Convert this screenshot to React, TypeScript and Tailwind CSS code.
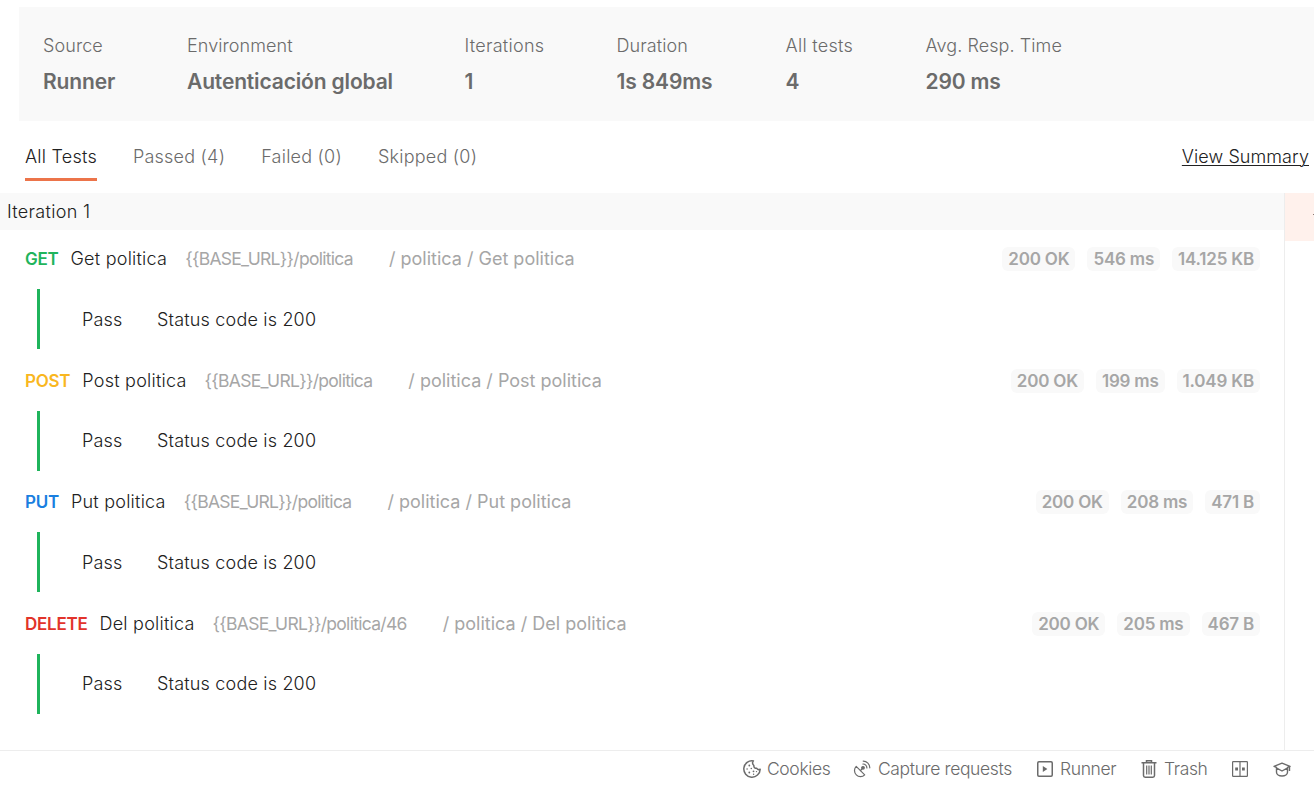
import type { ReactNode } from "react";

const stats = [
  { label: "Source", value: "Runner", cls: "w-[72px]" },
  { label: "Environment", value: "Autenticación global", cls: "w-[205.5px]" },
  { label: "Iterations", value: "1", cls: "w-[80px] tracking-[0.26px]" },
  { label: "Duration", value: "1s 849ms", cls: "w-[97px]" },
  { label: "All tests", value: "4", cls: "w-[68px] tracking-[0.28px]" },
  { label: "Avg. Resp. Time", value: "290 ms", cls: "w-[136px]" },
];

const requests = [
  { method: "GET", color: "text-[#1fb45c]", name: "Get politica", url: "{{BASE_URL}}/politica", time: "546 ms", size: "14.125 KB" },
  { method: "POST", color: "text-[#f9b71f]", name: "Post politica", url: "{{BASE_URL}}/politica", time: "199 ms", size: "1.049 KB" },
  { method: "PUT", color: "text-[#1a7fe0]", name: "Put politica", url: "{{BASE_URL}}/politica", time: "208 ms", size: "471 B" },
  { method: "DELETE", color: "text-[#e2332b]", name: "Del politica", url: "{{BASE_URL}}/politica/46", time: "205 ms", size: "467 B" },
];

function Badge({ children }: { children: ReactNode }) {
  return (
    <span className="flex h-6 items-center rounded-md bg-[#f9f9f9] px-1.5 text-[17px] font-semibold tracking-[-0.2px] text-[#a6a6a6]">
      {children}
    </span>
  );
}

function CookieIcon() {
  return (
    <svg width="18" height="18" viewBox="0 0 18 18" fill="none" stroke="#6b6b6b" strokeWidth="1.5" strokeLinejoin="round">
      <path d="M10.4.9A8.2 8.2 0 1 0 17.2 9.2c-1.2.7-2.7.3-3.4-.9-1.8.3-3.2-1-2.9-2.8C9.500 4.300 9.400 2.200 10.400.9Z" />
      <g fill="#6b6b6b" stroke="none">
        <circle cx="6.300" cy="5.500" r=".9" />
        <circle cx="4.100" cy="9" r=".8" />
        <circle cx="8.300" cy="8.500" r=".8" />
        <circle cx="6.300" cy="12.500" r=".9" />
        <circle cx="10.500" cy="11.300" r=".9" />
        <circle cx="10.600" cy="14.300" r=".7" />
        <circle cx="13.500" cy="11.600" r=".7" />
      </g>
    </svg>
  );
}

function SatelliteIcon() {
  return (
    <svg width="18" height="18" viewBox="0 0 18 18" fill="none" stroke="#6b6b6b" strokeWidth="1.200" strokeLinecap="round">
      <path d="M3.200 6.300 11.700 14.800c-2.300 2.400-6 2.500-8.400.1S.9 8.600 3.200 6.300Z" strokeLinejoin="round" />
      <path d="m7.500 10.500 2.200-2.400" />
      <circle cx="10" cy="7.800" r="1.300" fill="#6b6b6b" />
      <path d="M9.900 4c2.200-.1 4 1.700 4 3.900M10.200 1.100c3.700 0 6.600 3 6.600 6.700" />
    </svg>
  );
}

function RunnerIcon() {
  return (
    <svg width="16" height="16" viewBox="0 0 16 16" fill="none" stroke="#6b6b6b" strokeWidth="1.500">
      <rect x=".75" y=".75" width="14.500" height="14.500" rx="1.200" />
      <path d="M5.800 5v6l4.600-3Z" fill="#6b6b6b" stroke="none" />
    </svg>
  );
}

function TrashIcon() {
  return (
    <svg width="16" height="18" viewBox="0 0 16 18" fill="none" stroke="#6b6b6b" strokeWidth="1.500">
      <path d="M.5 2.700h15M5.500 2.500V.8h5v1.700M2.500 3v12.500c0 1 .7 1.700 1.700 1.700h7.600c1 0 1.700-.7 1.700-1.700V3" />
      <path d="M5.700 5.500v9M8 5.500v9M10.300 5.500v9" strokeWidth="1.200" />
    </svg>
  );
}

function PanesIcon() {
  return (
    <svg width="16" height="16" viewBox="0 0 16 16" fill="none" stroke="#6b6b6b" strokeWidth="1.200">
      <rect x=".6" y=".6" width="14.800" height="14.800" rx=".6" />
      <path d="M8 .6v14.800" />
      <path d="M3.200 6.600h2.800v2.800H3.200zM10 6.600h2.800v2.800H10z" fill="#6b6b6b" stroke="none" />
    </svg>
  );
}

function BootcampIcon() {
  return (
    <svg width="18" height="15" viewBox="0 0 18 15" fill="none" stroke="#6b6b6b" strokeWidth="1.400" strokeLinejoin="round">
      <path d="M4 5.700 1 4.400l8-3.200 8 3.200-3 1.300" />
      <path d="M3.500 5.500v4.800c0 2.100 2.400 3.700 5.500 3.700s5.500-1.600 5.500-3.700V5.500M3.800 6.200 9 9l5.200-2.800M16.500 4.600v4.400" />
    </svg>
  );
}

export default function App() {
  return (
    <div className="flex h-[789px] w-[1314px] flex-col overflow-hidden bg-white pt-[7px] font-['Inter',sans-serif] text-[18px] leading-6 text-[#212121]">
      <header className="ml-[19px] flex h-[114px] shrink-0 gap-[72px] bg-[#f9f9f9] pt-[27px] pl-6 tracking-[0.08px] text-[#6b6b6b]">
        {stats.map((s) => (
          <div key={s.label} className={`flex shrink-0 flex-col gap-3 whitespace-nowrap ${s.cls}`}>
            <span className="font-light">{s.label}</span>
            <span className="text-[21px] font-semibold tracking-[-0.15px]">{s.value}</span>
          </div>
        ))}
      </header>

      <nav className="flex h-[72px] shrink-0 items-start justify-between pt-6 pr-[5px] pl-[25px] font-light tracking-[0.23px]">
        <div className="flex gap-9 text-[#6b6b6b]">
          <span className="h-9 border-b-3 border-[#ec744a] text-[#212121]">All Tests</span>
          <span>Passed (4)</span>
          <span>Failed (0)</span>
          <span>Skipped (0)</span>
        </div>
        <a className="tracking-[0.08px] underline decoration-1 underline-offset-2">View Summary</a>
      </nav>

      <main className="flex h-[557px] shrink-0">
        <section className="w-[1284px]">
          <h2 className="flex h-[37px] items-center bg-[#f9f9f9] pt-px pl-[7px] font-light tracking-[0.3px]">Iteration 1</h2>
          {requests.map((r) => (
            <article key={r.method} className="h-[121.5px] pt-[17px]">
              <div className="flex h-6 items-center justify-between pr-6 pl-[25px]">
                <div className="flex items-center whitespace-nowrap">
                  <span className={`mr-3 text-[17px] font-semibold tracking-[-0.25px] ${r.color}`}>{r.method}</span>
                  <span className="mr-[18px] font-light tracking-[0.23px]">{r.name}</span>
                  <span className="mr-9 text-[17.5px] tracking-[-0.7px] text-[#a6a6a6]">{r.url}</span>
                  <span className="text-[#a6a6a6]">/ politica / {r.name}</span>
                </div>
                <div className="flex gap-3">
                  <Badge>200 OK</Badge>
                  <Badge>{r.time}</Badge>
                  <Badge>{r.size}</Badge>
                </div>
              </div>
              <div className="mt-[18px] ml-[37px] flex h-[60px] items-center border-l-3 border-[#1fb45c] pt-px pl-[42px] font-light tracking-[0.18px]">
                <span className="w-[75px]">Pass</span>
                <span>Status code is 200</span>
              </div>
            </article>
          ))}
        </section>
        <aside className="flex-1 border-l border-[#ededed]">
          <div className="flex h-12 items-center justify-end overflow-hidden bg-[#fff1ec]">
            <span className="mb-1.5 h-px w-px bg-[#8a7a75]" />
          </div>
        </aside>
      </main>

      <footer className="flex h-[39px] shrink-0 items-center border-t border-[#ededed] pb-[2px] pl-[743px] text-[17.5px] font-light tracking-[-0.37px] whitespace-nowrap text-[#6b6b6b]">
        <CookieIcon />
        <span className="ml-1.5 w-[86px]">Cookies</span>
        <SatelliteIcon />
        <span className="ml-[7px] w-[159px]">Capture requests</span>
        <RunnerIcon />
        <span className="ml-[7px] w-[81px]">Runner</span>
        <TrashIcon />
        <span className="ml-[7px] w-[68px]">Trash</span>
        <PanesIcon />
        <span className="w-[25px]" />
        <BootcampIcon />
      </footer>
    </div>
  );
}
